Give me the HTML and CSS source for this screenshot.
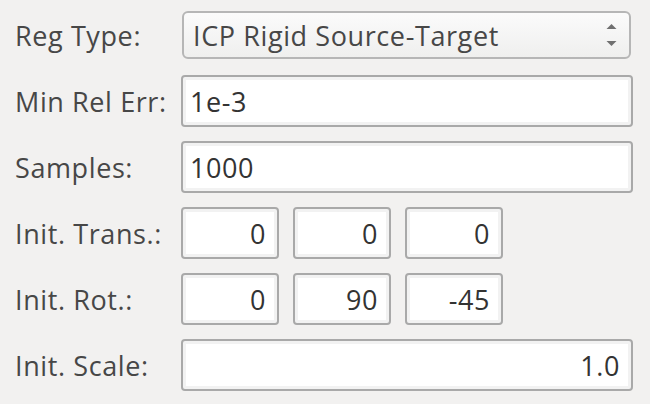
FILE: index.html
```html
<!DOCTYPE html>
<html>
<head>
<meta charset="utf-8">
<link rel="stylesheet" href="styles.css">
</head>
<body>
<div class="form">
  <label class="lbl">Reg Type:</label>
  <div class="combo">
    <span class="combo-text">ICP Rigid Source-Target</span>
    <svg class="arrows" width="11" height="24" viewBox="0 0 11 24">
      <path d="M0.5 6 L5.5 1 L10.5 6 Z" fill="#707070"/>
      <path d="M0.5 18 L5.5 23 L10.5 18 Z" fill="#707070"/>
    </svg>
  </div>

  <label class="lbl">Min Rel Err:</label>
  <div class="edit">1e-3</div>

  <label class="lbl">Samples:</label>
  <div class="edit">1000</div>

  <label class="lbl">Init. Trans.:</label>
  <div class="triple">
    <div class="edit num">0</div>
    <div class="edit num">0</div>
    <div class="edit num">0</div>
  </div>

  <label class="lbl">Init. Rot.:</label>
  <div class="triple">
    <div class="edit num">0</div>
    <div class="edit num">90</div>
    <div class="edit num">-45</div>
  </div>

  <label class="lbl">Init. Scale:</label>
  <div class="edit num">1.0</div>
</div>
</body>
</html>
```

FILE: styles.css
```css
html, body {
  margin: 0;
  padding: 0;
  background: #f2f1f0;
}
body {
  width: 650px;
  height: 404px;
  overflow: hidden;
  font-family: "Open Sans", "DejaVu Sans", sans-serif;
  font-size: 27px;
  letter-spacing: 0.6px;
}
.form {
  display: grid;
  grid-template-columns: 166px 452px;
  grid-auto-rows: 52px;
  row-gap: 14px;
  padding: 9px 0 0 15px;
  align-items: center;
}
.lbl {
  color: #474747;
  white-space: nowrap;
  line-height: 1;
  padding-top: 1px;
}
.combo {
  box-sizing: border-box;
  height: 48px;
  margin: 0 2px 0 1px;
  border: 2px solid #b6b6b6;
  border-radius: 6px;
  background: linear-gradient(#fbfbfb, #efefee);
  display: flex;
  align-items: center;
  justify-content: space-between;
  padding: 0 12px 0 9px;
  color: #474747;
}
.combo-text {
  line-height: 1;
}
.arrows {
  display: block;
}
.edit {
  box-sizing: border-box;
  height: 52px;
  border: 2px solid #a9a9a9;
  border-radius: 4px;
  background: #fff;
  box-shadow: inset 0 0 0 3px #f2f2f2;
  color: #333;
  display: flex;
  align-items: center;
  padding: 0 11px 0 7px;
  line-height: 1;
}
.edit.num {
  justify-content: flex-end;
}
.triple {
  display: flex;
  gap: 14px;
  height: 52px;
}
.triple .edit {
  width: 98px;
}
```
